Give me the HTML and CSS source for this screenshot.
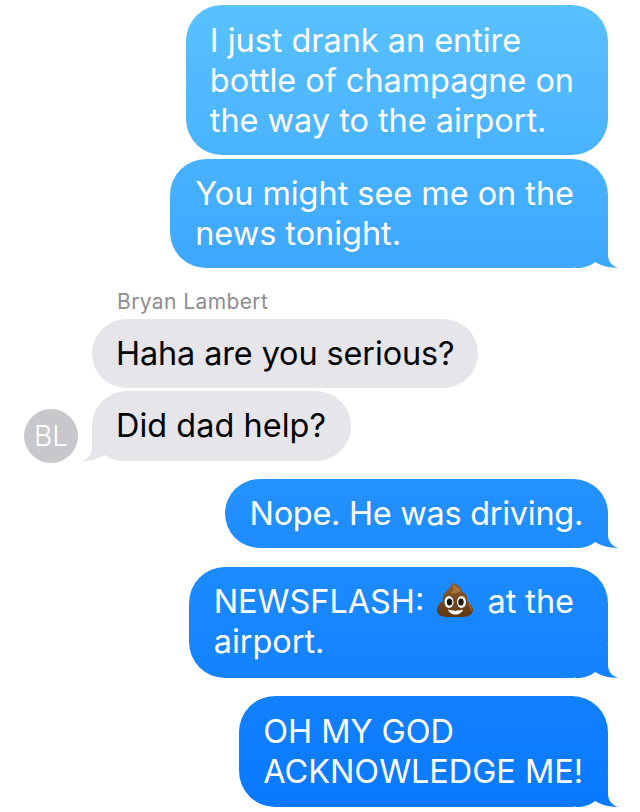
FILE: index.html
```html
<!DOCTYPE html>
<html lang="en">
<head>
    <meta charset="UTF-8">
    <title>Messages</title>
    <link rel="stylesheet" href="styles.css">
</head>
<body>
<div id="thread">
    <div class="msg out first">I just drank an entire<br>bottle of champagne on<br>the way to the airport.</div>
    <div class="msg out tail second">You might see me on the<br>news tonight.</div>

    <div class="sender">Bryan Lambert</div>
    <div class="msg in top">Haha are you serious?</div>
    <div class="row-in">
        <div class="avatar">BL</div>
        <div class="msg in tail">Did dad help?</div>
    </div>

    <div class="msg out tail nope">Nope. He was driving.</div>
    <div class="msg out tail news">NEWSFLASH:
        <svg class="poop" viewBox="0 0 36 34" width="36" height="34">
            <defs>
                <linearGradient id="poopFill" x1="0" y1="0" x2="0" y2="1">
                    <stop offset="0" stop-color="#8f5a2a"/>
                    <stop offset="1" stop-color="#5f3715"/>
                </linearGradient>
            </defs>
            <path d="M15 0C14 3 12 6 9 9 6 11 5 14 6 18 2 20 0 24 0 27 0 32 5 34 10 34H26C32 34 36 31 36 27 36 23 33 20 30 18 31 14 29 10 25 9 25 5 21 1 15 0Z" fill="url(#poopFill)"/>
            <path d="M15 2C17 5 17 8 13 10 17 11 21 10 24 8 23 5 19 3 15 2ZM31 19C35 22 35 26 34 28 33 24 32 21 31 19Z" fill="#a87238"/>
            <ellipse cx="12" cy="19" rx="4.500" ry="6" fill="#fff"/>
            <ellipse cx="24.500" cy="19" rx="4.500" ry="6" fill="#fff"/>
            <ellipse cx="12.500" cy="19" rx="2.700" ry="3.600" fill="#20130a"/>
            <ellipse cx="24" cy="19" rx="2.700" ry="3.600" fill="#20130a"/>
            <path d="M11 26.500C15 28 22 28 26 26.500 25 30 22 31.500 18.500 31.500S12 30 11 26.500Z" fill="#fff"/>
        </svg>
        at the<br>airport.</div>
    <div class="msg out tail last">OH MY GOD<br>ACKNOWLEDGE ME!</div>
</div>
</body>
</html>
```

FILE: styles.css
```css
* {
    margin: 0;
    padding: 0;
    box-sizing: border-box;
}

html, body {
    background: #fff;
    overflow: hidden;
    height: 812px;
}

body {
    font-family: Inter, "Liberation Sans", sans-serif;
}

#thread {
    display: flex;
    flex-direction: column;
    padding: 5px 32px 0 24px;
    isolation: isolate;
}

.msg {
    position: relative;
    padding: 15px 25px 14px;
    border-radius: 36px;
    font-size: 32.400px;
    line-height: 40px;
    white-space: nowrap;
}

.out {
    align-self: flex-end;
    color: #fff;
    background: linear-gradient(180deg, #5ac2ff 0, #2290ff 500px, #0878ff 812px) fixed;
}

.in {
    align-self: flex-start;
    color: #000;
    background: #e5e5ea;
    padding-left: 24px;
    padding-right: 24px;
}

.first {
    height: 150px;
    padding-top: 16px;
    padding-right: 34px;
    padding-left: 24px;
}

.second {
    margin-top: 4px;
    height: 109px;
    padding-right: 34px;
}

/* sits behind the bubble so it never covers the text */
.tail::after {
    content: "";
    position: absolute;
    z-index: -1;
    right: -12px;
    bottom: 0;
    width: 44px;
    height: 34px;
    background: inherit;
    clip-path: path("M0 34C8 34 14 32 19 28 24 31 32 34 43 34 37 33 32 28 32 21V0H0Z");
}

.in.tail::after {
    right: auto;
    left: -12px;
    clip-path: path("M44 34C36 34 30 32 25 28 20 31 12 34 1 34 7 33 12 28 12 21V0H44Z");
}

.sender {
    margin: 24px 0 0 93px;
    height: 27px;
    font-size: 21px;
    line-height: 20px;
    letter-spacing: .4px;
    color: #8e8e93;
}

.top {
    margin-left: 68px;
    height: 69px;
    letter-spacing: -.1px;
}

.row-in {
    display: flex;
    align-items: flex-end;
    gap: 14px;
    margin-top: 3px;
}

.row-in .msg {
    height: 70px;
    padding-right: 25px;
    letter-spacing: .05px;
}

.avatar {
    width: 54px;
    height: 54px;
    margin-bottom: -2px;
    border-radius: 50%;
    background: #c7c7cc;
    color: #fff;
    font-size: 28px;
    font-weight: 300;
    line-height: 54px;
    text-align: center;
}

.nope {
    margin-top: 18px;
    height: 69px;
    letter-spacing: -.25px;
}

.news {
    margin-top: 19px;
    height: 111px;
    padding-right: 34px;
}

.last {
    margin-top: 18px;
    height: 111px;
    padding-top: 16px;
    padding-left: 24px;
}

.poop {
    vertical-align: -4px;
    margin: 0 5px 0 4px;
}
```
